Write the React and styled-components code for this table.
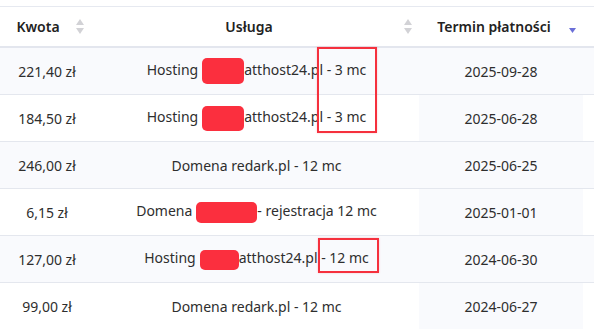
import styled, { createGlobalStyle } from 'styled-components';

const Global = createGlobalStyle`
  html, body {
    margin: 0;
    padding: 0;
    background: #ffffff;
    overflow: hidden;
  }
  body {
    font-family: 'Noto Sans', 'Open Sans', sans-serif;
    font-size: 14px;
    color: #2e2e2e;
  }
`;

const Page = styled.div`
  position: relative;
  width: 594px;
  height: 329px;
  padding-top: 6px;
  box-sizing: border-box;
  overflow: hidden;
`;

const Table = styled.table`
  width: 640px;
  border-collapse: collapse;
  table-layout: fixed;
  border-top: 1px solid #e6e9f0;
`;

const HeadCell = styled.th`
  height: 39px;
  padding: 0 ${(p) => p.$pad || 8}px 0 0;
  border-bottom: 2px solid #e3e6ee;
  font-weight: 600;
  color: #222;
  font-size: 14px;
`;

const HeadInner = styled.div`
  display: flex;
  align-items: center;
`;

const HeadText = styled.span`
  flex: 1;
  text-align: center;
  white-space: nowrap;
`;

const Row = styled.tr`
  background: ${(p) => (p.$striped ? '#f9fafd' : '#ffffff')};
  border-bottom: 1px solid #e4e7ee;
`;

const Cell = styled.td`
  height: 46px;
  padding: 0;
  text-align: center;
  white-space: nowrap;
  background: ${(p) => (p.$sorted ? '#f9fafd' : 'transparent')};
`;

const Blob = styled.span`
  display: inline-block;
  width: ${(p) => p.$w}px;
  height: ${(p) => p.$h}px;
  margin-left: ${(p) => p.$ml ?? 4}px;
  background: #fb2f3e;
  border-radius: 5px;
  vertical-align: middle;
`;

const Mark = styled.div`
  position: absolute;
  left: ${(p) => p.$x}px;
  top: ${(p) => p.$y}px;
  width: ${(p) => p.$w}px;
  height: ${(p) => p.$h}px;
  border: 2px solid #f5303d;
  box-sizing: border-box;
  box-shadow: 0 0 2px rgba(245, 48, 61, 0.25);
`;

const SortBoth = () => (
  <svg width="8" height="16" viewBox="0 0 8 16">
    <polygon points="4,0 8,6 0,6" fill="#d2d2d6" />
    <polygon points="0,9 8,9 4,15" fill="#d2d2d6" />
  </svg>
);

const SortDesc = () => (
  <svg width="8" height="16" viewBox="0 0 8 16">
    <polygon points="0,9 7,9 3.5,14" fill="#6b6fd8" />
  </svg>
);

const rows = [
  { amount: '221,40 zł', service: ['Hosting', { w: 42, h: 26 }, 'atthost24.pl - 3 mc'], date: '2025-09-28' },
  { amount: '184,50 zł', service: ['Hosting', { w: 42, h: 25 }, 'atthost24.pl - 3 mc'], date: '2025-06-28' },
  { amount: '246,00 zł', service: ['Domena redark.pl - 12 mc'], date: '2025-06-25' },
  { amount: '6,15 zł', service: ['Domena', { w: 61, h: 21 }, '- rejestracja 12 mc'], date: '2025-01-01' },
  { amount: '127,00 zł', service: ['Hosting', { w: 39, h: 20 }, 'atthost24.pl - 12 mc'], date: '2024-06-30' },
  { amount: '99,00 zł', service: ['Domena redark.pl - 12 mc'], date: '2024-06-27' },
];

export default function App() {
  return (
    <>
      <Global />
      <Page>
        <Table>
          <colgroup>
            <col style={{ width: 94 }} />
            <col style={{ width: 325 }} />
            <col style={{ width: 164 }} />
            <col />
          </colgroup>
          <thead>
            <tr>
              <HeadCell $pad={10}>
                <HeadInner>
                  <HeadText>Kwota</HeadText>
                  <SortBoth />
                </HeadInner>
              </HeadCell>
              <HeadCell $pad={7}>
                <HeadInner>
                  <HeadText>Usługa</HeadText>
                  <SortBoth />
                </HeadInner>
              </HeadCell>
              <HeadCell $pad={6}>
                <HeadInner>
                  <HeadText>Termin płatności</HeadText>
                  <SortDesc />
                </HeadInner>
              </HeadCell>
              <HeadCell />
            </tr>
          </thead>
          <tbody>
            {rows.map((r, i) => (
              <Row key={i} $striped={i % 2 === 0}>
                <Cell>{r.amount}</Cell>
                <Cell>
                  {r.service.map((part, j) =>
                    typeof part === 'string' ? (
                      <span key={j}>{part}</span>
                    ) : (
                      <Blob key={j} $w={part.w} $h={part.h} />
                    )
                  )}
                </Cell>
                <Cell $sorted>{r.date}</Cell>
                <Cell />
              </Row>
            ))}
          </tbody>
        </Table>
        <Mark $x={317} $y={47} $w={60} $h={86} />
        <Mark $x={318} $y={238} $w={61} $h={35} />
      </Page>
    </>
  );
}
